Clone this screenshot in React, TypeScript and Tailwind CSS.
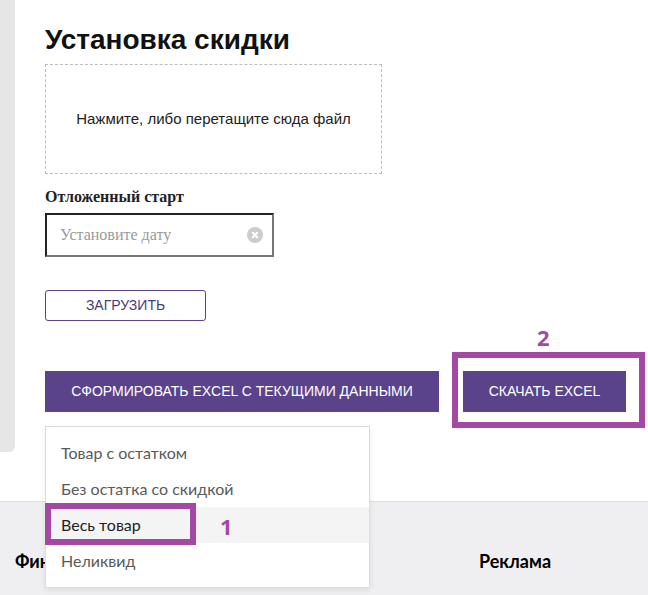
import { useState } from 'react';

const menuItems = ['Товар с остатком', 'Без остатка со скидкой', 'Весь товар', 'Неликвид'];

function ClearIcon() {
  return (
    <svg width="16" height="16" viewBox="0 0 16 16" aria-hidden="true">
      <circle cx="8" cy="8" r="8" fill="#cccccc" />
      <path d="M5.8 5.8 L10.2 10.2 M10.2 5.8 L5.8 10.2" stroke="#ffffff" strokeWidth="2" strokeLinecap="round" />
    </svg>
  );
}

export default function App() {
  const [active] = useState('Весь товар');

  return (
    <div className="relative w-[648px] h-[595px] overflow-hidden bg-white">
      <div className="flex h-[501px] items-start">
        <div className="w-[15px] h-[452px] shrink-0 rounded-br-[6px] bg-[#e6e6e6]" />

        <div className="flex flex-col items-start pl-[30px] pt-[24px]">
          <h1 className="text-[28px] leading-[32px] font-bold text-[#111] font-['Liberation_Sans',Arial,sans-serif]">
            Установка скидки
          </h1>

          <div className="mt-[8px] flex h-[110px] w-[337px] items-center justify-center border border-dashed border-[#bdbdbd] text-[15px] text-[#222] font-['Liberation_Sans',Arial,sans-serif]">
            Нажмите, либо перетащите сюда файл
          </div>

          <label className="mt-[13px] text-[16px] leading-[20px] font-bold text-[#222] font-['Liberation_Serif','Times_New_Roman',serif]">
            Отложенный старт
          </label>

          <div className="mt-[6px] flex h-[44px] w-[229px] items-center border-2 border-t-[#222] border-l-[#222] border-r-[#767676] border-b-[#767676] pl-[13px] pr-[9px]">
            <input
              readOnly
              placeholder="Установите дату"
              className="min-w-0 flex-1 bg-transparent text-[16px] text-[#222] outline-none placeholder:text-[#9a9a9a] font-['Liberation_Serif','Times_New_Roman',serif]"
            />
            <ClearIcon />
          </div>

          <button className="mt-[33px] h-[31px] w-[161px] rounded-[3px] border border-[#5a438a] text-[14px] uppercase text-[#4a3b7d] font-['Liberation_Sans',Arial,sans-serif]">
            Загрузить
          </button>

          <div className="relative mt-[50px] flex gap-[24px] font-['Liberation_Sans',Arial,sans-serif]">
            <button className="h-[41px] w-[394px] bg-[#5a438a] text-[14px] uppercase text-white">
              Сформировать Excel с текущими данными
            </button>
            <button className="h-[41px] w-[163px] bg-[#5a438a] text-[14px] uppercase text-white">
              Скачать Excel
            </button>

            {/* annotation 2 */}
            <div className="pointer-events-none absolute left-[407px] top-[-19px] h-[76px] w-[193px] border-[6px] border-[#a349a4]" />
            <span className="absolute left-[492px] top-[-45px] text-[22px] leading-[22px] font-bold text-[#a349a4] font-['Open_Sans',sans-serif]">
              2
            </span>

            {/* dropdown menu */}
            <div className="absolute left-0 top-[55px] w-[325px] border border-[#dcdcdc] bg-white py-[8px] shadow-[0_2px_6px_rgba(0,0,0,0.08)] font-['Lato',sans-serif]">
              {menuItems.map((item) => (
                <div
                  key={item}
                  className={
                    item === active
                      ? 'flex h-[36px] items-center bg-[#f4f4f4] pl-[15px] text-[16px] text-[#222]'
                      : 'flex h-[36px] items-center pl-[15px] text-[16px] text-[#5a5a5a]'
                  }
                >
                  {item}
                </div>
              ))}

              {/* annotation 1 */}
              <div className="pointer-events-none absolute left-[-1px] top-[76px] h-[42px] w-[151px] border-[6px] border-[#a349a4]" />
              <span className="absolute left-[174px] top-[88px] text-[22px] leading-[22px] font-bold text-[#a349a4] font-['Open_Sans',sans-serif]">
                1
              </span>
            </div>
          </div>
        </div>
      </div>

      <footer className="flex h-[94px] border-t border-[#dedee2] bg-[#efeff2] pl-[15px] pt-[48px] text-[18px] leading-[22px] font-bold text-black font-['Lato',sans-serif]">
        <div className="w-[464px]">Финансы</div>
        <div>Реклама</div>
      </footer>
    </div>
  );
}
